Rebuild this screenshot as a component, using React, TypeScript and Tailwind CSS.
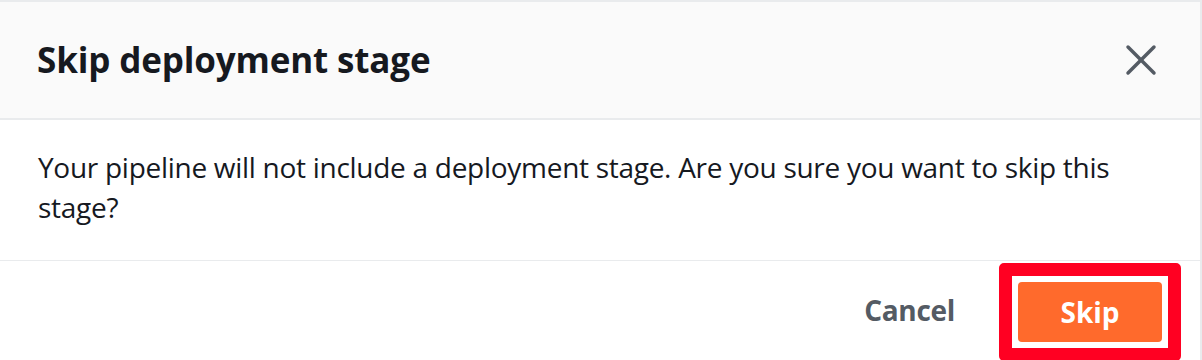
import { X } from 'lucide-react';

export default function App() {
  return (
    <div
      className="w-[1202px] h-[360px] overflow-hidden bg-white"
      style={{ fontFamily: '"Open Sans", "Noto Sans", Arial, sans-serif' }}
    >
      <div className="h-full border-t-2 border-r-2 border-[#e9ebed]">
        {/* Header */}
        <div className="h-[118px] bg-[#fafafa] border-b-2 border-[#e9ebed] flex items-center justify-between pl-[37px] pr-[33px]">
          <h2 className="text-[35px] font-bold text-[#16191f] tracking-[-0.15px]">Skip deployment stage</h2>
          <button className="text-[#545b64]">
            <X className="w-[52px] h-[52px]" strokeWidth={1.6} />
          </button>
        </div>

        {/* Body */}
        <div className="pl-[38px] pr-[40px] pt-[27px] pb-[33px] border-b border-[#e9ebed]">
          <p className="text-[28px] leading-[40px] text-[#16191f] tracking-[-0.28px]">
            Your pipeline will not include a deployment stage. Are you sure you want to skip this stage?
          </p>
        </div>

        {/* Footer */}
        <div className="flex items-start justify-end pt-[2px] pr-[19px] gap-[44px]">
          <button className="mt-[29px] text-[28px] font-bold text-[#545b64] leading-[36px] tracking-[-0.3px]">Cancel</button>
          <div className="border-[13px] border-[#ff0022] rounded-[5px] p-[6px]">
            <button className="w-[144px] h-[60px] rounded-[4px] bg-[#ff6a2c] text-white text-[28px] font-bold">
              Skip
            </button>
          </div>
        </div>
      </div>
    </div>
  );
}
